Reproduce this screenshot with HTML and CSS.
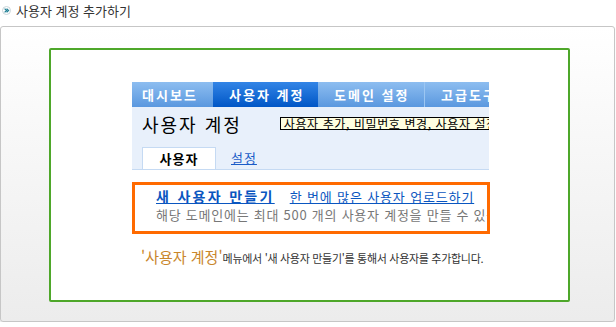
FILE: index.html
```html
<!DOCTYPE html>
<html lang="ko">
  <head>
    <meta charset="UTF-8" />
    <title>사용자 계정 추가하기</title>
    <link rel="stylesheet" href="styles.css">
  </head>
  <body>
    <h1 class="head">
      <svg class="bullet" width="9" height="9" viewBox="0 0 9 9">
        <circle cx="4.5" cy="4.5" r="4" fill="#fff" stroke="#c8d4d8" />
        <path d="M2.6 2.6 L4.6 4.5 L2.6 6.4 M4.6 2.6 L6.6 4.5 L4.6 6.4" fill="none" stroke="#1f7f94" stroke-width="1.2" />
      </svg>
      사용자 계정 추가하기
    </h1>

    <div class="card">
      <div class="frame">
        <!-- 화면 캡처 -->
        <div class="shot">
          <ul class="nav">
            <li class="first">대시보드</li>
            <li class="on">사용자 계정</li>
            <li>도메인 설정</li>
            <li>고급도구</li>
          </ul>
          <div class="shot-body">
            <div class="shot-title">
              <h2>사용자 계정</h2>
              <span class="tip">사용자 추가, 비밀번호 변경, 사용자 설정 변경</span>
            </div>
            <div class="tabs">
              <span class="tab">사용자</span>
              <a href="javascript:">설정</a>
            </div>
          </div>
        </div>

        <div class="mark">
          <div class="links">
            <a class="new" href="javascript:">새 사용자 만들기</a>
            <a href="javascript:">한 번에 많은 사용자 업로드하기</a>
          </div>
          <p class="desc">해당 도메인에는 최대 500 개의 사용자 계정을 만들 수 있습니다.</p>
        </div>

        <p class="caption"><em>'사용자 계정'</em>메뉴에서 '새 사용자 만들기'를 통해서 사용자를 추가합니다.</p>
      </div>
    </div>
  </body>
</html>
```

FILE: styles.css
```css
* {
  margin: 0;
  padding: 0;
  box-sizing: border-box;
}

body {
  font-family: "Noto Sans CJK KR", "DejaVu Sans", sans-serif;
  color: #333;
  background: #fff;
}

ul {
  list-style: none;
}

a {
  color: #0a56c0;
}

.head {
  display: flex;
  align-items: center;
  gap: 5px;
  height: 20px;
  padding-left: 2px;
  font-size: 13px;
  font-weight: 400;
  color: #333;
}

.card {
  width: 615px;
  height: 296px;
  margin-top: 6px;
  padding: 21px 0 0 48px;
  border: 1px solid #c6c6c6;
  border-radius: 3px;
  background: linear-gradient(#fff, #ececec);
  box-shadow: 0 1px 1px #ddd;
}

.frame {
  width: 521px;
  height: 254px;
  padding: 32px 0 0 81px;
  border: 2px solid #4ea72a;
  border-radius: 2px;
  background: #fff;
}

.shot {
  width: 357px;
  overflow: hidden;
  border-bottom: 1px solid #c5daf3;
}

.nav {
  display: flex;
  height: 25px;
  white-space: nowrap;
}

.nav li {
  flex: none;
  width: 106px;
  padding-left: 16px;
  line-height: 25px;
  font-size: 13px;
  font-weight: 700;
  letter-spacing: 2px;
  color: #fff;
  background: linear-gradient(#8dbdf0, #5a98df);
  border-left: 1px solid #9cc6f2;
}

.nav .first {
  width: 81px;
  padding-left: 10px;
  border-left: 0;
}

.nav .on {
  width: 105px;
  background: linear-gradient(#3385e6, #0056c6);
  border-left: 0;
}

.nav .on + li {
  border-left: 0;
}

.shot-body {
  height: 62px;
  padding: 6px 0 0 10px;
  background: #e8f0fb;
}

.shot-title {
  display: flex;
  align-items: flex-start;
  height: 24px;
  white-space: nowrap;
}

.shot-title h2 {
  font-size: 18px;
  font-weight: 400;
  line-height: 22px;
  letter-spacing: 2px;
  color: #000;
}

.tip {
  margin: 4px 0 0 38px;
  padding: 0 3px;
  height: 13px;
  line-height: 11px;
  font-size: 12px;
  letter-spacing: 0.6px;
  color: #000;
  background: #ffffe1;
  border: 1px solid #000;
}

.tabs {
  display: flex;
  align-items: flex-end;
  margin-top: 10px;
  height: 22px;
}

.tab {
  width: 74px;
  height: 22px;
  line-height: 22px;
  text-align: center;
  font-size: 13px;
  font-weight: 700;
  letter-spacing: 1px;
  color: #000;
  background: #fff;
  border: 1px solid #c5daf3;
  border-bottom: 0;
}

.tabs a {
  margin: 0 0 3px 15px;
  font-size: 13px;
  line-height: 17px;
  letter-spacing: 1px;
  color: #1a5cc8;
}

.mark {
  width: 358px;
  height: 52px;
  margin-top: 12px;
  padding: 2px 0 0 21px;
  border: 3px solid #ff6a00;
  overflow: hidden;
  white-space: nowrap;
}

.links {
  display: flex;
  align-items: baseline;
  gap: 15px;
  height: 19px;
  line-height: 18px;
}

.links a {
  font-size: 13px;
  letter-spacing: 0.85px;
}

.links .new {
  font-size: 14px;
  font-weight: 700;
  letter-spacing: 2.3px;
}

.desc {
  margin-top: 1px;
  font-size: 13px;
  line-height: 16px;
  color: #777;
  letter-spacing: 0.75px;
}

.caption {
  margin: 12px 0 0 9px;
  font-size: 11px;
  letter-spacing: -0.3px;
  color: #333;
  white-space: nowrap;
}

.caption em {
  font-style: normal;
  font-size: 15px;
  letter-spacing: 0;
  color: #c9862b;
}
```
